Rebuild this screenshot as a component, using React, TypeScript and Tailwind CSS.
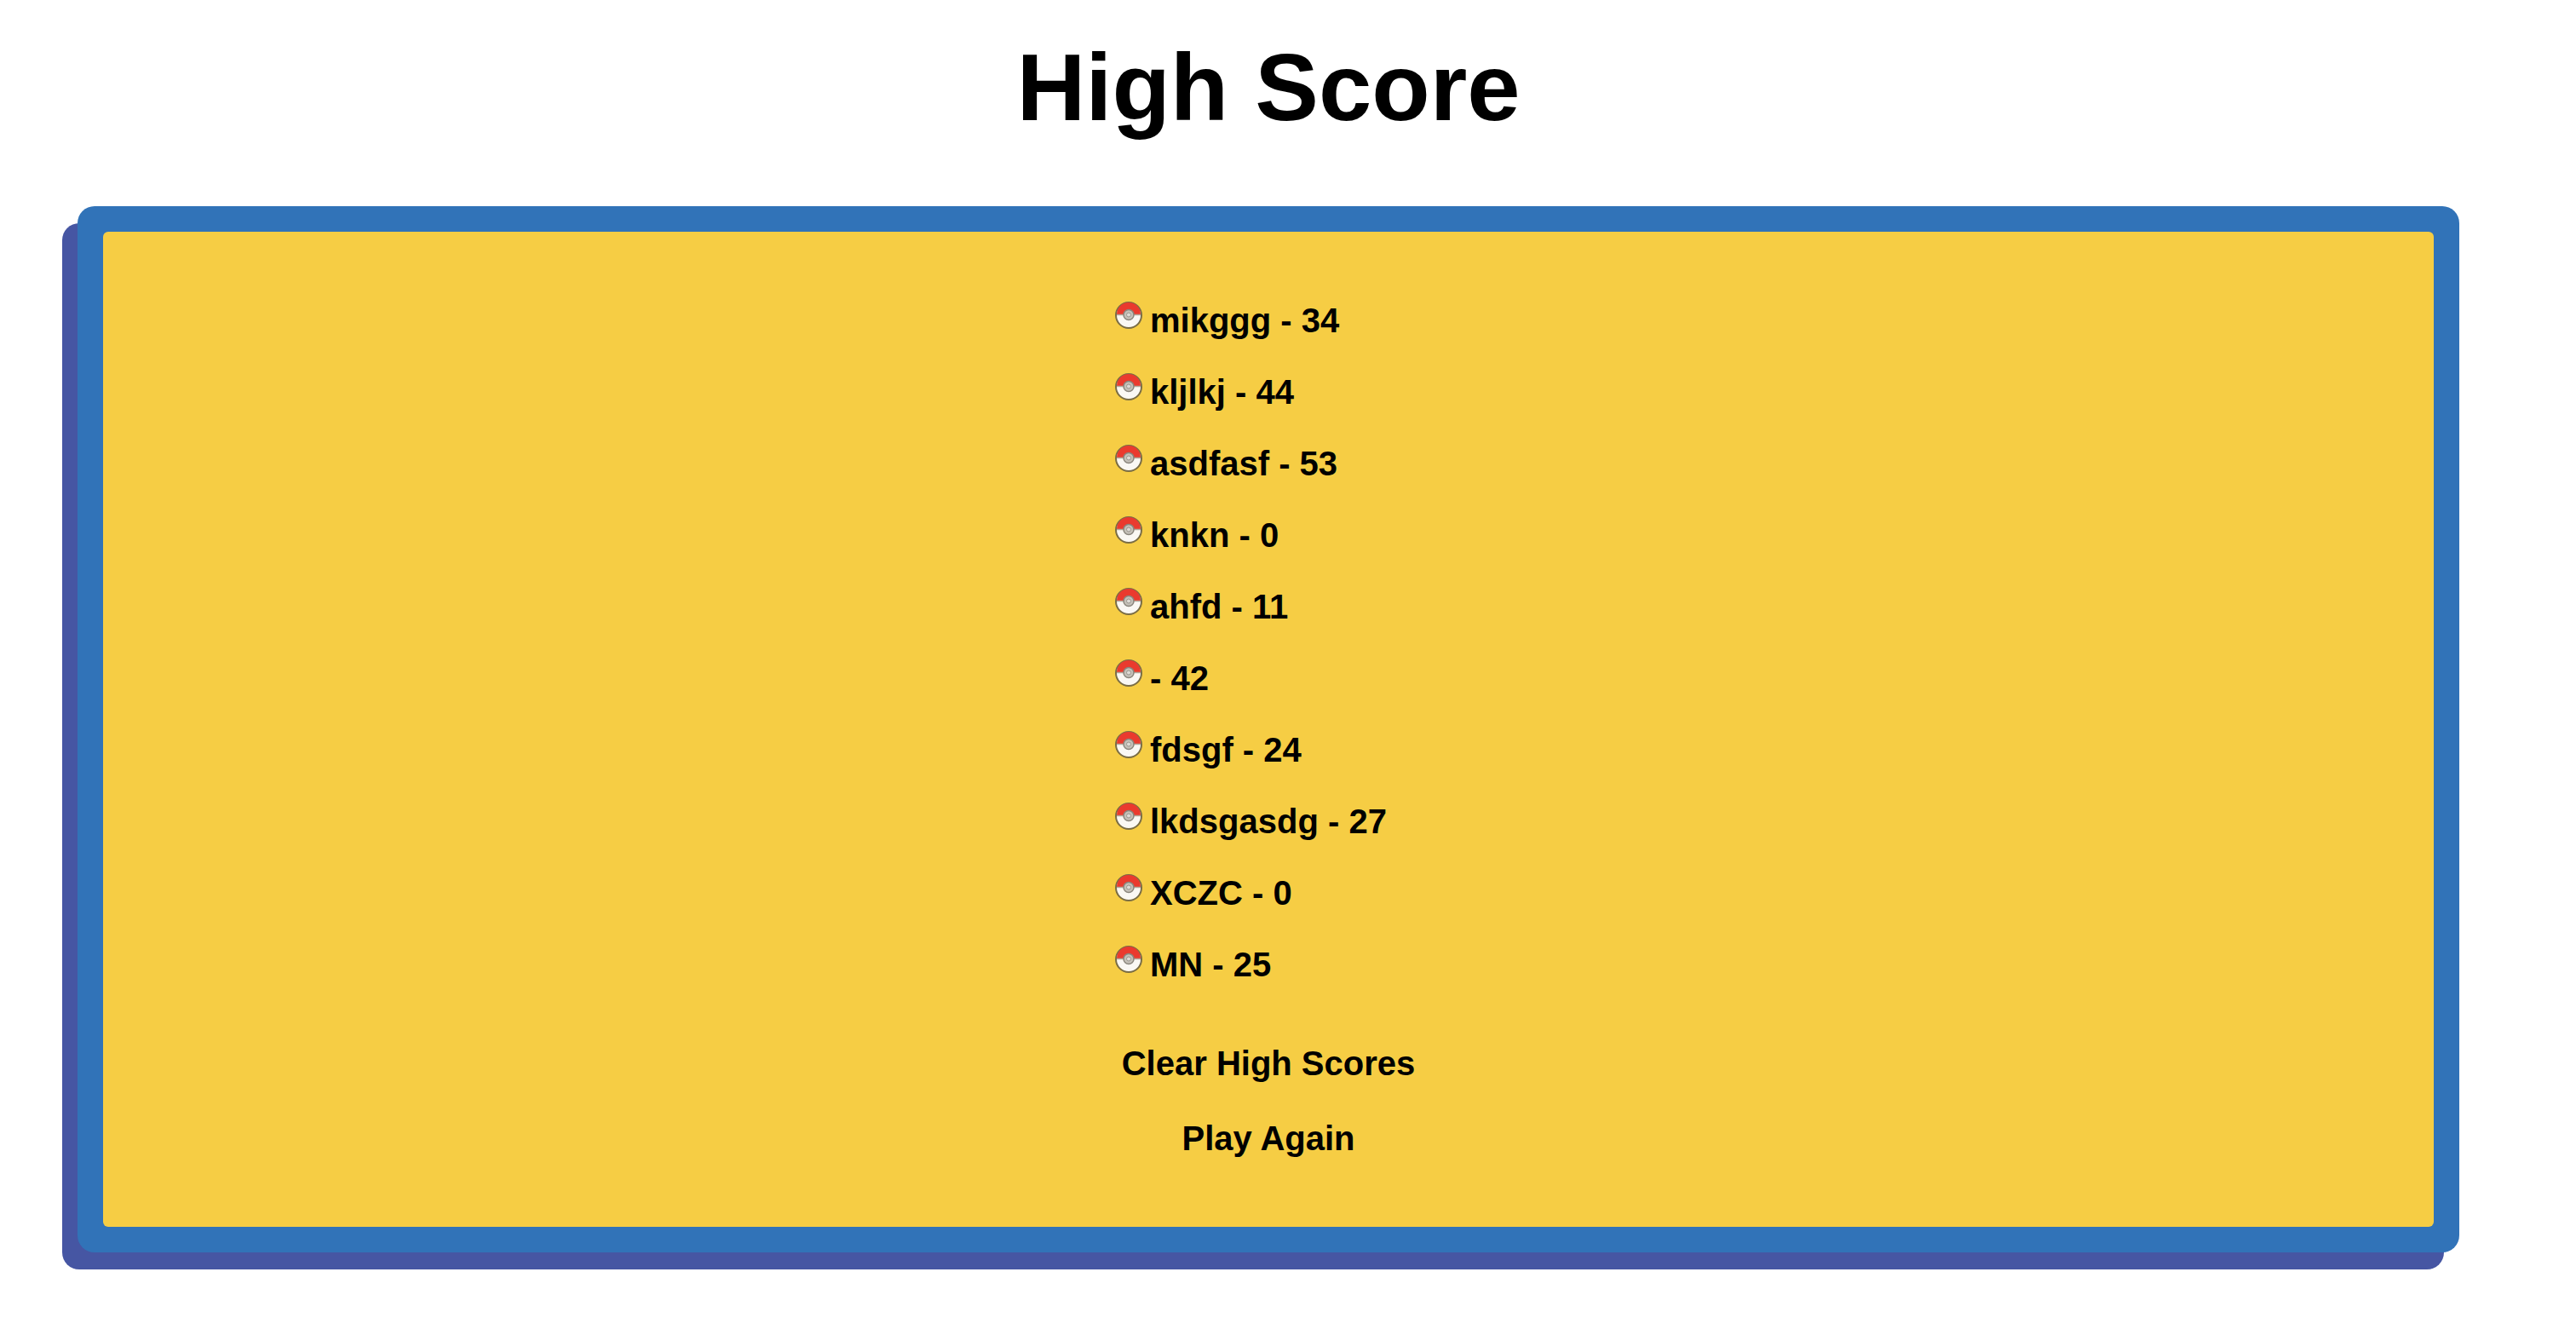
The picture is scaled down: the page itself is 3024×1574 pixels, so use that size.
import React from "react";

const scores = [
  { name: "mikggg", score: 34 },
  { name: "kljlkj", score: 44 },
  { name: "asdfasf", score: 53 },
  { name: "knkn", score: 0 },
  { name: "ahfd", score: 11 },
  { name: "", score: 42 },
  { name: "fdsgf", score: 24 },
  { name: "lkdsgasdg", score: 27 },
  { name: "XCZC", score: 0 },
  { name: "MN", score: 25 },
];

const Pokeball = () => (
  <svg viewBox="0 0 32 32" className="w-[32px] h-[32px] shrink-0 mt-[-12px] mr-[9px] blur-[0.6px]">
    <circle cx="16" cy="16" r="15" fill="#faf8f4" stroke="#7a6d45" strokeWidth="2" />
    <path d="M2 15a14 14 0 0 1 28 0z" fill="#ea3a2e" />
    <path d="M2 15.500h28" stroke="#b0a89a" strokeWidth="1.500" />
    <circle cx="16" cy="15.500" r="6" fill="#c4c0b8" stroke="#8a857c" strokeWidth="1.500" />
    <circle cx="16" cy="15.500" r="2.500" fill="#dedbd6" stroke="#8f8a82" strokeWidth="0.800" />
  </svg>
);

export default function App() {
  return (
    <div className="bg-white min-h-[1574px] font-['Liberation_Sans',Arial,sans-serif] text-black overflow-hidden">
      <h1 className="ml-[91px] w-[2796px] text-center font-bold text-[112px] leading-[134px] pt-[36px] mb-[72px]">
        High Score
      </h1>
      <div className="ml-[91px] w-[2796px] h-[1228px] p-[30px] rounded-[20px] bg-[#3173b8] shadow-[-18px_20px_0_0_#4656a3]">
        <div className="h-full rounded-[6px] bg-[#f6cd44] flex flex-col items-center pt-[79px]">
          <ul className="w-[330px] -ml-[30px] flex flex-col gap-[34px] font-bold text-[40px] leading-[50px]">
            {scores.map((s, i) => (
              <li key={i} className="flex items-center whitespace-nowrap h-[50px]">
                <Pokeball />
                <span>{s.name ? `${s.name} - ${s.score}` : `- ${s.score}`}</span>
              </li>
            ))}
          </ul>
          <button className="font-bold text-[40px] leading-[50px] mt-[66px]">Clear High Scores</button>
          <button className="font-bold text-[40px] leading-[50px] mt-[38px]">Play Again</button>
        </div>
      </div>
    </div>
  );
}
